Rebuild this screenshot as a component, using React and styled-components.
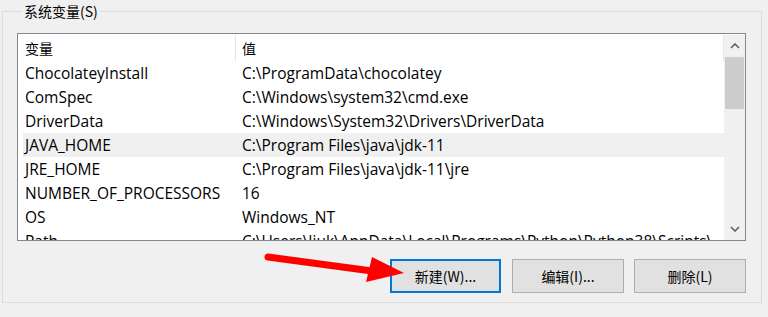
import React from "react";
import styled, { createGlobalStyle } from "styled-components";

const GlobalStyle = createGlobalStyle`
  html, body {
    margin: 0;
    padding: 0;
    background: #f0f0f0;
  }
  body {
    font-family: "Open Sans", "Noto Sans CJK SC", sans-serif;
    font-size: 15.5px;
    color: #000;
  }
`;

const rows = [
  ["ChocolateyInstall", "C:\\ProgramData\\chocolatey"],
  ["ComSpec", "C:\\Windows\\system32\\cmd.exe"],
  ["DriverData", "C:\\Windows\\System32\\Drivers\\DriverData"],
  ["JAVA_HOME", "C:\\Program Files\\java\\jdk-11"],
  ["JRE_HOME", "C:\\Program Files\\java\\jdk-11\\jre"],
  ["NUMBER_OF_PROCESSORS", "16"],
  ["OS", "Windows_NT"],
  ["Path", "C:\\Users\\Jiuk\\AppData\\Local\\Programs\\Python\\Python38\\Scripts\\"],
];

const Page = styled.div`
  position: relative;
  width: 768px;
  height: 317px;
  padding: 1px 6px 0 2px;
  box-sizing: border-box;
  overflow: hidden;
`;

const Group = styled.fieldset`
  margin: 0;
  height: 302px;
  box-sizing: border-box;
  border: 1px solid #dcdcdc;
  padding: 12px 15px 0 14px;
  display: flex;
  flex-direction: column;
`;

const Legend = styled.legend`
  padding: 0 2px;
  margin-left: 5px;
  line-height: 20px;
  font-family: "Noto Sans CJK SC", sans-serif;
  font-size: 14px;
`;

const ListBox = styled.div`
  height: 208px;
  box-sizing: border-box;
  border: 1px solid #828790;
  background: #fff;
  display: flex;
  overflow: hidden;
`;

const ListBody = styled.div`
  flex: 1;
  padding-left: 5px;
  overflow: hidden;
  min-width: 0;
`;

const Columns = styled.div`
  display: grid;
  grid-template-columns: 213px 1fr;
  height: ${(p) => p.$h}px;
  align-items: center;
  background: ${(p) => (p.$selected ? "#f0f0f0" : "transparent")};
  white-space: nowrap;
`;

const HeaderCell = styled.div`
  height: 26px;
  margin-top: 1px;
  display: flex;
  align-items: center;
  padding-left: ${(p) => (p.$first ? 2 : 6)}px;
  border-right: 1px solid #e5e5e5;
  font-family: "Noto Sans CJK SC", sans-serif;
  font-size: 14px;
`;

const Cell = styled.div`
  padding-left: ${(p) => (p.$first ? 2 : 6)}px;
  overflow: hidden;
`;

const ScrollBar = styled.div`
  width: 21px;
  background: #f0f0f0;
  display: flex;
  flex-direction: column;
  align-items: center;
  margin-top: 1px;
`;

const ArrowBtn = styled.div`
  height: 22px;
  width: 100%;
  display: flex;
  align-items: center;
  justify-content: center;
`;

const Thumb = styled.div`
  width: 19px;
  height: 52px;
  background: #cdcdcd;
`;

const Track = styled.div`
  flex: 1;
`;

const Buttons = styled.div`
  display: flex;
  justify-content: flex-end;
  margin-top: 18px;
`;

const Button = styled.button`
  width: ${(p) => p.$w}px;
  height: 34px;
  margin-left: ${(p) => p.$gap || 0}px;
  box-sizing: border-box;
  background: #e1e1e1;
  border: ${(p) => (p.$focus ? "2px solid #0078d7" : "1px solid #adadad")};
  font-family: "Noto Sans CJK SC", sans-serif;
  font-size: 14px;
  color: #000;
  padding: 0;
`;

const Overlay = styled.svg`
  position: absolute;
  left: 0;
  top: 0;
  pointer-events: none;
`;

const Chevron = ({ down }) => (
  <svg width="10" height="6" viewBox="0 0 10 6">
    <path
      d={down ? "M1 1 L5 5 L9 1" : "M1 5 L5 1 L9 5"}
      fill="none"
      stroke="#606060"
      strokeWidth="1.6"
    />
  </svg>
);

export default function App() {
  return (
    <>
      <GlobalStyle />
      <Page>
        <Group>
          <Legend>系统变量(S)</Legend>
          <ListBox>
            <ListBody>
              <Columns $h={27}>
                <HeaderCell $first>变量</HeaderCell>
                <HeaderCell>值</HeaderCell>
              </Columns>
              {rows.map(([name, value], i) => (
                <Columns key={name} $h={24} $selected={i === 3}>
                  <Cell $first>{name}</Cell>
                  <Cell>{value}</Cell>
                </Columns>
              ))}
            </ListBody>
            <ScrollBar>
              <ArrowBtn>
                <Chevron />
              </ArrowBtn>
              <Thumb />
              <Track />
              <ArrowBtn>
                <Chevron down />
              </ArrowBtn>
            </ScrollBar>
          </ListBox>
          <Buttons>
            <Button $w={111} $focus>
              新建(W)...
            </Button>
            <Button $w={112} $gap={11}>
              编辑(I)...
            </Button>
            <Button $w={112} $gap={10}>
              删除(L)
            </Button>
          </Buttons>
        </Group>
        <Overlay width="768" height="317">
          <line x1="268" y1="257" x2="372" y2="271" stroke="#ff0000" strokeWidth="7" strokeLinecap="round" />
          <polygon points="372,257 366,282 404,273" fill="#ff0000" />
        </Overlay>
      </Page>
    </>
  );
}
